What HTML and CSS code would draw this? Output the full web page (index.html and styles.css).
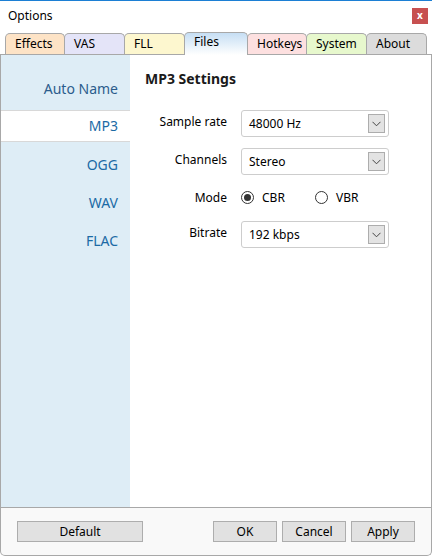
FILE: index.html
```html
<!DOCTYPE html>
<html>
<head>
<meta charset="utf-8">
<link rel="stylesheet" href="styles.css">
</head>
<body>
<div class="window">
  <div class="titlebar">
    <span class="title">Options</span>
    <span class="close">x</span>
  </div>
  <div class="tabs">
    <div class="tab t-effects">Effects</div>
    <div class="tab t-vas">VAS</div>
    <div class="tab t-fll">FLL</div>
    <div class="tab t-files active">Files</div>
    <div class="tab t-hotkeys">Hotkeys</div>
    <div class="tab t-system">System</div>
    <div class="tab t-about">About</div>
  </div>
  <div class="panel">
    <div class="sidebar">
      <div class="nav nav-first">Auto Name</div>
      <div class="nav selected">MP3</div>
      <div class="nav">OGG</div>
      <div class="nav">WAV</div>
      <div class="nav">FLAC</div>
    </div>
    <div class="content">
      <h2 class="heading">MP3 Settings</h2>
      <div class="form">
        <div class="row r-sample">
          <span class="label">Sample rate</span>
          <div class="select"><span>48000 Hz</span><span class="arrow"><svg width="9" height="6" viewBox="0 0 9 6"><path d="M0.5 0.8 L4.5 4.8 L8.5 0.8" fill="none" stroke="#444" stroke-width="1"/></svg></span></div>
        </div>
        <div class="row r-channels">
          <span class="label">Channels</span>
          <div class="select"><span>Stereo</span><span class="arrow"><svg width="9" height="6" viewBox="0 0 9 6"><path d="M0.5 0.8 L4.5 4.8 L8.5 0.8" fill="none" stroke="#444" stroke-width="1"/></svg></span></div>
        </div>
        <div class="row r-mode">
          <span class="label">Mode</span>
          <div class="radios">
            <span class="radio"><span class="circle checked"></span>CBR</span>
            <span class="radio"><span class="circle"></span>VBR</span>
          </div>
        </div>
        <div class="row r-bitrate">
          <span class="label">Bitrate</span>
          <div class="select"><span>192 kbps</span><span class="arrow"><svg width="9" height="6" viewBox="0 0 9 6"><path d="M0.5 0.8 L4.5 4.8 L8.5 0.8" fill="none" stroke="#444" stroke-width="1"/></svg></span></div>
        </div>
      </div>
    </div>
  </div>
  <div class="footer">
    <button class="btn btn-default">Default</button>
    <div class="spacer"></div>
    <button class="btn">OK</button>
    <button class="btn">Cancel</button>
    <button class="btn">Apply</button>
  </div>
</div>
</body>
</html>
```
FILE: styles.css
```css
* { box-sizing: border-box; }
html, body { margin: 0; padding: 0; }
body {
  width: 432px;
  height: 556px;
  background: #ffffff;
  font-family: "Noto Sans", "Liberation Sans", sans-serif;
  font-size: 12px;
  color: #000;
  overflow: hidden;
}
.window {
  width: 432px;
  height: 556px;
  border-top: 1px solid #1c7fd4;
  display: flex;
  flex-direction: column;
}
.titlebar {
  height: 31px;
  display: flex;
  align-items: center;
  justify-content: space-between;
  padding: 0 4px 0 8px;
}
.title { font-size: 12px; color: #000; margin-top: -2px; }
.close {
  width: 16px;
  height: 16px;
  background: #c75050;
  color: #fff;
  font-size: 10px;
  font-weight: bold;
  display: flex;
  align-items: center;
  justify-content: center;
  line-height: 1;
  padding-bottom: 2px;
  margin-top: -1px;
}
.tabs {
  height: 22px;
  display: flex;
  align-items: flex-end;
  padding-left: 5px;
  position: relative;
  z-index: 2;
}
.tab {
  height: 21px;
  border: 1px solid #a8a8a8;
  border-bottom: none;
  border-radius: 5px 5px 0 0;
  padding: 1px 0 0 9px;
  font-size: 12px;
  color: #000;
  line-height: 18px;
  margin-right: -1px;
}
.t-effects { width: 60px; background: #fde3c6; }
.t-vas { width: 61px; background: #e4e4f8; }
.t-fll { width: 61px; background: #fdf7cf; }
.t-files {
  width: 64px;
  height: 23px;
  padding-top: 0;
  margin-bottom: -1px;
  background: linear-gradient(#c6def4, #ffffff);
}
.t-hotkeys { width: 60px; background: #fde0e0; }
.t-system { width: 61px; background: #e7f8cd; }
.t-about { width: 61px; background: #dcdcdc; }
.panel {
  height: 454px;
  border: 1px solid #a8a8a8;
  display: flex;
  background: #fff;
}
.sidebar {
  width: 129px;
  background: #deedf6;
  display: flex;
  flex-direction: column;
  padding-top: 22px;
}
.nav {
  height: 38px;
  text-align: right;
  padding-right: 12px;
  font-size: 14px;
  line-height: 24px;
  color: #1b6aa5;
}
.nav-first { color: #2b5c8c; height: 33px; }
.nav.selected {
  background: #fff;
  height: 32px;
  line-height: 30px;
  border-top: 1px solid #d8d8d8;
  border-bottom: 1px solid #d8d8d8;
  margin-bottom: 11px;
}
.content {
  flex: 1;
  padding: 14px 0 0 15px;
}
.heading {
  margin: 0;
  font-size: 14px;
  font-weight: bold;
  line-height: 20px;
  color: #1a1a1a;
}
.form {
  margin-top: 21px;
  display: flex;
  flex-direction: column;
}
.row {
  display: flex;
  align-items: center;
}
.label {
  width: 82px;
  text-align: right;
  margin-right: 14px;
  font-size: 12px;
  position: relative;
  top: -2px;
}
.r-sample { height: 27px; }
.r-channels { height: 27px; margin-top: 11px; }
.r-mode { height: 22px; margin-top: 11px; }
.r-mode .label { top: 0; }
.r-bitrate { height: 27px; margin-top: 13px; }
.select {
  width: 148px;
  height: 27px;
  border: 1px solid #cdcdcd;
  border-radius: 3px;
  display: flex;
  align-items: center;
  justify-content: space-between;
  padding: 0 3px 0 7px;
  font-size: 12px;
  background: #fff;
}
.arrow {
  width: 17px;
  height: 19px;
  background: #e3e3e3;
  border: 1px solid #adadad;
  display: flex;
  align-items: center;
  justify-content: center;
}
.radios { display: flex; align-items: center; }
.radio {
  display: flex;
  align-items: center;
  width: 74px;
  font-size: 12px;
}
.circle {
  width: 13px;
  height: 13px;
  border: 1px solid #333;
  border-radius: 50%;
  margin-right: 8px;
  position: relative;
  background: #fff;
}
.circle.checked::after {
  content: "";
  position: absolute;
  left: 2px;
  top: 2px;
  width: 7px;
  height: 7px;
  border-radius: 50%;
  background: #333;
}
.footer {
  flex: 1;
  background: #f9f9f9;
  border: 1px solid #a8a8a8;
  border-top: none;
  border-radius: 0 0 5px 5px;
  display: flex;
  align-items: flex-start;
  padding: 13px 16px 0 16px;
  gap: 5px;
}
.spacer { flex: 1; }
.btn {
  height: 21px;
  width: 64px;
  background: #e1e1e1;
  border: 1px solid #adadad;
  font-family: "Noto Sans", "Liberation Sans", sans-serif;
  font-size: 12px;
  color: #000;
  padding: 0;
  line-height: 19px;
}
.btn-default { width: 126px; }
```
